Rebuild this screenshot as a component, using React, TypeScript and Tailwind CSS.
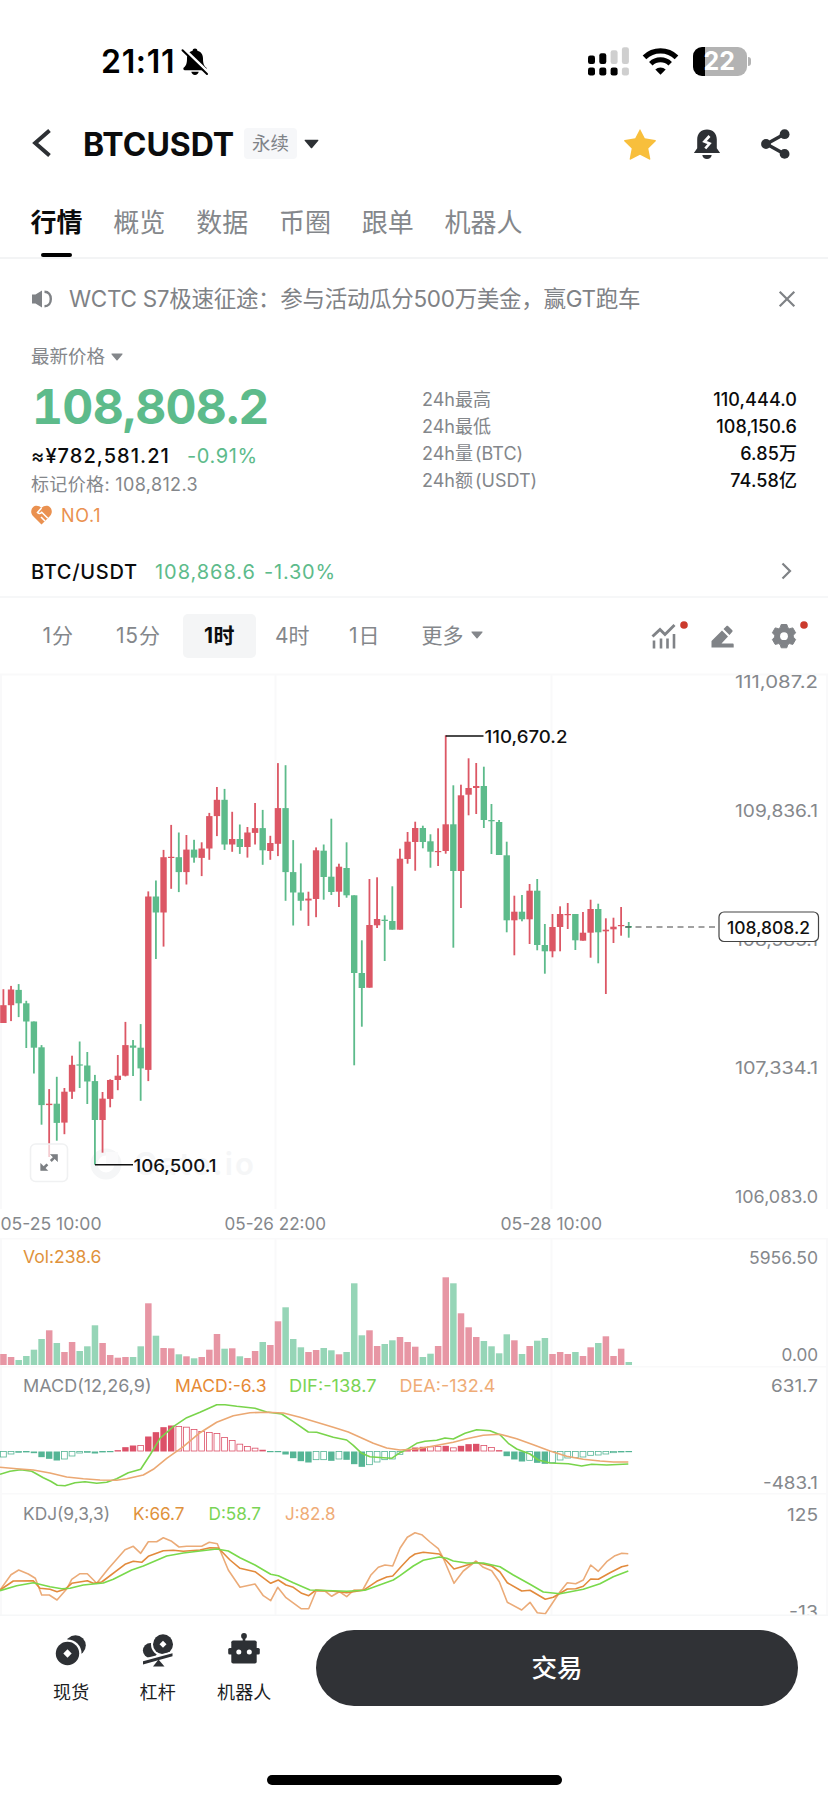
import React, { useState } from 'react';

type Dir = 'r' | 'g';
// [direction, high, open/close top, open/close bottom, low] in chart pixels
type Candle = [Dir, number, number, number, number];
type Point = [number, number];

const RED = '#dc5765';
const GREEN = '#5dbb8b';
const STEP = 7.626;
const FIRST_X = 3.4;
const AXIS = '#85888c';

const candles: Candle[] = [
  ['r', 989.2, 1005.2, 1023, 1023], ['r', 985.9, 989.5, 1005.2, 1021.1], ['g', 984.1, 989.9, 1003.3, 1017.1],
  ['g', 1000.8, 1003.3, 1021.5, 1048], ['g', 1021.5, 1021.5, 1047.7, 1073.5], ['g', 1045.1, 1047.3, 1105.1, 1124.7],
  ['r', 1089.1, 1103.7, 1105.1, 1157], ['g', 1076.8, 1103.7, 1122.9, 1140.7], ['r', 1088, 1091.7, 1122.6, 1134.2],
  ['r', 1055.7, 1064.8, 1091.7, 1098.9], ['g', 1041.5, 1064.4, 1065.5, 1088], ['g', 1052, 1065.5, 1081.5, 1104],
  ['g', 1074.9, 1081.1, 1120, 1164.7], ['r', 1092, 1098.6, 1120, 1152.7], ['r', 1079.3, 1080, 1098.9, 1107.3],
  ['r', 1055, 1075.7, 1080, 1090.2], ['r', 1021.9, 1045.1, 1075.7, 1076.4], ['g', 1040, 1045.5, 1047.7, 1076],
  ['g', 1024.1, 1047.7, 1068.4, 1100.8], ['r', 891.4, 896.5, 1069.9, 1081.1], ['g', 880.5, 896.5, 912.5, 959],
  ['r', 849.9, 857.2, 912.5, 946.6], ['r', 824.9, 856.8, 857.9, 888.8], ['g', 832.5, 857.2, 872.1, 892.1],
  ['r', 835, 849.6, 872.1, 884.5], ['g', 839.8, 849.6, 857.6, 862.7], ['r', 842.3, 848.5, 857.9, 876.1],
  ['r', 812.9, 816.1, 848.5, 859.8], ['r', 787, 799.8, 816.1, 836.1], ['g', 788.9, 799.8, 844.5, 849.9],
  ['r', 811.8, 839, 844.5, 851.8], ['g', 824.5, 839, 847, 853.9], ['r', 827, 832.5, 847, 857.6],
  ['r', 803, 828.1, 832.9, 844.5], ['g', 809.9, 828.1, 850.3, 864.8], ['r', 835.8, 843, 851, 859.8],
  ['r', 763.1, 808.1, 843.8, 856.1], ['g', 765.2, 808.1, 872.1, 900.8], ['g', 840.1, 872.1, 892.5, 925.5],
  ['g', 863.4, 892.5, 900.8, 910.6], ['r', 891.7, 898.6, 900.5, 925.9], ['r', 847.4, 850.3, 899, 917.2],
  ['g', 844.5, 850.7, 877, 899.7], ['g', 818.7, 876.7, 892, 895], ['r', 863.7, 866.7, 891.7, 907],
  ['g', 842.3, 868, 895.3, 897.7], ['g', 895.3, 895.3, 973, 1065.3], ['g', 940.3, 973, 988, 1026.7],
  ['r', 879, 925, 987.7, 987.7], ['r', 877.3, 919, 925.3, 928], ['g', 915.3, 919.7, 921, 961],
  ['g', 886.3, 921, 929.7, 929.7], ['r', 848.7, 858.7, 929.7, 929.7], ['r', 832, 841.7, 859, 863.7],
  ['r', 821.7, 828, 842, 870.7], ['g', 825.7, 828, 842, 848.3], ['g', 834.3, 841.3, 851.7, 867.7],
  ['r', 828.3, 851, 852, 866], ['r', 735.3, 824.3, 851, 853.7], ['g', 785.3, 824.3, 871, 947.7],
  ['r', 784.7, 795.3, 871, 908], ['r', 758.3, 788, 794.7, 815.3], ['r', 763, 786, 788, 814],
  ['g', 766.7, 786, 820, 828], ['g', 804, 820, 821.3, 854], ['g', 820, 822, 855, 855],
  ['g', 841.7, 855.3, 920.3, 932.3], ['r', 895.7, 911.7, 920.3, 955.3], ['g', 895, 911.7, 919.3, 921.3],
  ['r', 884, 890.7, 919.3, 944], ['g', 879, 890.7, 945, 950.3], ['g', 924, 945, 951.3, 973.7],
  ['r', 914, 927, 951.3, 957.3], ['r', 906.3, 914, 927, 951.3], ['r', 903, 914, 915, 929],
  ['g', 914, 914, 940.3, 950], ['r', 912, 932.7, 940.7, 940.7], ['r', 899.7, 909, 932.7, 957.7],
  ['g', 903.7, 909, 932.3, 963.3], ['r', 918.3, 929.7, 931.3, 994], ['r', 917.7, 926.7, 929.3, 943],
  ['r', 907, 925, 926, 935.7], ['g', 922, 926, 927.7, 937.7],
];

const volumes: number[] = [
  11, 8, 5, 9, 15.3, 26, 34.7, 22, 13, 23, 14, 18.7, 39.7, 22, 10, 7.3, 8, 8, 18.7, 61.7, 29.3, 17, 16.7, 10.7, 8.7,
  6.7, 8, 15.3, 31, 16.3, 16.7, 8.7, 7, 14, 23, 20, 43.7, 57.7, 26, 17.7, 13, 15, 17, 14.7, 10.7, 13, 81.7, 29.7,
  34.7, 19, 21, 24.7, 28, 23, 18.3, 8, 11.3, 19, 87.7, 81.7, 51.7, 37.7, 28, 24, 18.7, 11.7, 30.7, 24.7, 11, 19,
  24.3, 27, 11, 13, 11, 13, 9, 17.7, 22, 28.7, 9, 16.3, 3,
];

// positive = red above the zero line, negative = green below
const macd: number[] = [
  -18, -9, -4, -3, -5, -17, -22, -27, -24, -15, -6, -4, -6, -3, 0, 4, 13, 18, 18, 45, 58, 73, 78, 75, 73, 66, 60, 57,
  54, 42, 33, 22, 15, 10, 4, -1, -2, -9, -20, -29, -33, -26, -26, -28, -24, -25, -38, -46, -41, -33, -26, -24, -10, 4,
  12, 14, 14, 15, 17, 11, 17, 22, 23, 18, 12, 4, -14, -24, -30, -28, -34, -37, -35, -27, -21, -20, -18, -13, -12, -9,
  -5, -3, -2,
];

const macdFilled = [
  4, 5, 6, 7, 12, 15, 16, 17, 19, 20, 21, 22, 37, 38, 39, 40, 43, 45, 46, 47, 53, 54, 55, 58, 60, 61, 62, 65, 66, 67,
  68, 70, 71,
];

const difLine: Point[] = [
  [0, 313], [30, 304], [62, 299], [95, 304], [110, 312], [130, 323], [152, 334], [172, 346], [195, 347], [225, 338],
  [255, 335], [290, 340], [320, 337], [350, 326], [385, 308], [422, 298], [450, 255], [480, 205], [520, 170],
  [560, 143], [600, 127], [650, 104], [675, 104], [710, 109], [765, 115], [800, 126], [845, 132], [880, 155],
  [925, 186], [950, 187], [1000, 202], [1040, 210], [1060, 226], [1085, 250], [1110, 260], [1150, 263], [1175, 265],
  [1200, 248], [1225, 236], [1250, 220], [1275, 214], [1310, 211], [1335, 204], [1360, 207], [1395, 190],
  [1430, 179], [1470, 182], [1500, 194], [1525, 220], [1550, 237], [1590, 252], [1615, 270], [1650, 279],
  [1705, 281], [1745, 288], [1775, 283], [1820, 285], [1885, 282],
];

const deaLine: Point[] = [
  [0, 292], [50, 296], [100, 300], [150, 309], [200, 321], [250, 326], [300, 330], [350, 331], [380, 326], [430, 315],
  [460, 298], [500, 265], [550, 230], [600, 188], [650, 157], [700, 137], [750, 128], [800, 127], [850, 129],
  [900, 142], [950, 157], [1000, 172], [1045, 186], [1080, 202], [1120, 220], [1160, 234], [1200, 240], [1250, 237],
  [1300, 228], [1360, 217], [1400, 206], [1450, 196], [1500, 193], [1550, 206], [1600, 224], [1650, 243],
  [1700, 259], [1750, 268], [1800, 273], [1840, 276], [1885, 276],
];

const jLine: Point[] = [
  [0, 660], [33, 614], [56, 600], [85, 612], [106, 625], [125, 675], [148, 675], [171, 690], [200, 657], [215, 628],
  [240, 611], [262, 611], [290, 640], [325, 596], [375, 539], [400, 529], [422, 550], [445, 515], [470, 515],
  [490, 503], [515, 514], [537, 531], [560, 529], [605, 529], [628, 517], [652, 521], [685, 600], [720, 652],
  [765, 642], [790, 677], [812, 692], [833, 652], [858, 683], [903, 716], [926, 716], [948, 664], [975, 663],
  [995, 679], [1018, 665], [1040, 680], [1062, 660], [1088, 660], [1112, 616], [1135, 592], [1155, 585], [1178, 588],
  [1200, 535], [1222, 502], [1245, 488], [1265, 494], [1290, 516], [1315, 536], [1330, 565], [1362, 640],
  [1390, 603], [1428, 573], [1450, 592], [1475, 602], [1498, 635], [1522, 697], [1565, 720], [1590, 697],
  [1612, 728], [1636, 731], [1680, 665], [1702, 638], [1727, 641], [1750, 630], [1772, 585], [1795, 604],
  [1820, 575], [1845, 557], [1865, 550], [1885, 551],
];

const kLine: Point[] = [
  [0, 660], [40, 633], [100, 632], [120, 655], [150, 658], [171, 665], [195, 658], [215, 640], [262, 632], [280, 640],
  [305, 636], [375, 583], [400, 574], [425, 577], [445, 559], [490, 542], [520, 541], [550, 544], [600, 540],
  [630, 533], [655, 534], [690, 570], [720, 595], [765, 605], [812, 640], [835, 630], [858, 645], [880, 652],
  [905, 670], [926, 677], [948, 660], [1000, 664], [1040, 668], [1090, 661], [1130, 634], [1160, 621], [1178, 618],
  [1205, 588], [1230, 562], [1245, 552], [1270, 547], [1318, 552], [1340, 573], [1362, 597], [1385, 590],
  [1428, 577], [1475, 588], [1500, 606], [1522, 638], [1565, 663], [1590, 661], [1636, 688], [1660, 682],
  [1702, 657], [1727, 656], [1750, 649], [1772, 627], [1795, 628], [1830, 608], [1865, 590], [1885, 586],
];

const dLine: Point[] = [
  [0, 662], [50, 647], [100, 638], [150, 650], [185, 656], [210, 655], [250, 645], [310, 639], [340, 628], [395, 600],
  [430, 588], [500, 558], [550, 549], [600, 543], [650, 537], [685, 543], [720, 563], [765, 585], [812, 613],
  [835, 617], [880, 638], [930, 660], [1000, 662], [1040, 664], [1095, 661], [1120, 652], [1180, 630], [1200, 617],
  [1240, 588], [1270, 571], [1318, 561], [1340, 565], [1360, 573], [1400, 579], [1450, 579], [1500, 590],
  [1540, 615], [1590, 643], [1630, 666], [1680, 671], [1750, 658], [1800, 641], [1840, 620], [1885, 603],
];

const toPoints = (line: Point[]) =>
  line.map(([x, y]) => `${(x / 3).toFixed(1)},${(1370 + y / 3).toFixed(1)}`).join(' ');

const candleX = (i: number) => FIRST_X + i * STEP;

interface LabelProps {
  x: number;
  y: number;
  width: number;
  fill?: string;
  weight?: number;
  end?: boolean;
  children: string;
}

const Label: React.FC<LabelProps> = ({ x, y, width, fill = AXIS, weight = 400, end, children }) => (
  <text
    x={end ? x - width : x}
    y={y}
    fill={fill}
    fontSize={17.2}
    fontWeight={weight}
    textLength={width}
    lengthAdjust="spacingAndGlyphs"
  >
    {children}
  </text>
);

const GridLines: React.FC<{ top: number; bottom: number }> = ({ top, bottom }) => (
  <g stroke="#f9f9fa" strokeWidth={2}>
    <path d={`M1 ${top}V${bottom}M275.5 ${top}V${bottom}M551.5 ${top}V${bottom}M827 ${top}V${bottom}`} />
    <path d={`M0 ${top + 0.5}H828`} />
  </g>
);

const PriceChart = () => (
  <svg className="block h-[564px] w-[828px] overflow-visible" viewBox="0 674 828 564">
    <GridLines top={674} bottom={1209} />
    {/* watermark */}
    <circle cx={106} cy={1164} r={12} fill="none" stroke="#f5f6f7" strokeWidth={7} />
    <path d="M106 1152h12v12h-12z" fill="#fafafb" />
    <text x={134} y={1175} fill="#f5f6f7" fontSize={31} fontWeight={600} textLength={120}>Gate.io</text>

    {candles.map(([dir, high, top, bottom, low], i) => {
      const x = candleX(i);
      const color = dir === 'r' ? RED : GREEN;
      return (
        <g key={i} fill={color}>
          <rect x={x - 0.9} y={high} width={1.8} height={low - high} />
          <rect x={x - 3.2} y={top} width={6.4} height={Math.max(bottom - top, 1.2)} />
        </g>
      );
    })}

    <path d="M445.7 736H483.5M95 1164.7H133" stroke="#111" strokeWidth={1.4} />
    <Label x={484.5} y={742.8} width={83} fill="#111" weight={500}>110,670.2</Label>
    <Label x={133.5} y={1172} width={83} fill="#111" weight={500}>106,500.1</Label>

    <path d="M625 927H718" stroke="#444" strokeWidth={1.2} strokeDasharray="6 4.5" />

    <Label x={818} y={688.3} width={83} end>111,087.2</Label>
    <Label x={818} y={817} width={83} end>109,836.1</Label>
    <Label x={818} y={945.8} width={83} end>108,585.1</Label>
    <Label x={818} y={1074.3} width={83} end>107,334.1</Label>
    <Label x={818} y={1203} width={83} end>106,083.0</Label>

    <rect x={719} y={912} width={99.5} height={29.5} rx={5} fill="#fff" stroke="#444" strokeWidth={1.2} />
    <Label x={727} y={933.5} width={83} fill="#111" weight={500}>108,808.2</Label>

    {/* full screen toggle */}
    <rect x={30.5} y={1144} width={37} height={37.5} rx={5} fill="#fff" fillOpacity={0.7} stroke="#f0f1f2" strokeWidth={1.6} />
    <g fill="#7c7f83" stroke="#7c7f83">
      <path d="M50.5 1154.5H57.5V1161.5ZM40.7 1163.5V1170.5H47.7Z" strokeWidth={0.6} />
      <path d="M50.8 1161L55 1156.8M47.4 1164.3L43.2 1168.5" strokeWidth={2.6} />
    </g>

    <Label x={0.5} y={1229.5} width={101}>05-25 10:00</Label>
    <Label x={224.5} y={1229.5} width={101.5}>05-26 22:00</Label>
    <Label x={500.5} y={1229.5} width={101.5}>05-28 10:00</Label>
  </svg>
);

const VolumeChart = () => (
  <svg className="block h-[128px] w-[828px]" viewBox="0 1238 828 128">
    <GridLines top={1238} bottom={1366} />
    {volumes.map((height, i) => (
      <rect
        key={i}
        x={candleX(i) - 3.2}
        y={1365 - height}
        width={6.5}
        height={height}
        fill={candles[i][0] === 'r' ? '#e796a4' : '#96d5b7'}
      />
    ))}
    <Label x={23} y={1263.3} width={78.5} fill="#e0923c">Vol:238.6</Label>
    <Label x={818} y={1264.3} width={69} end>5956.50</Label>
    <Label x={818} y={1361.3} width={36.5} end>0.00</Label>
  </svg>
);

const MacdChart = () => (
  <svg className="block h-[127px] w-[828px]" viewBox="0 1366 828 127">
    <GridLines top={1366} bottom={1493} />
    {macd.map((value, i) => {
      const height = Math.abs(value) / 3;
      const color = value > 0 ? '#dc5068' : '#55b595';
      const y = value > 0 ? 1451.5 - height : 1451.5;
      if (macdFilled.includes(i)) {
        return <rect key={i} x={candleX(i) - 3.2} y={y} width={6.4} height={height} fill={color} />;
      }
      return (
        <rect
          key={i}
          x={candleX(i) - 2.9}
          y={y}
          width={5.8}
          height={Math.max(height - 0.5, 0.3)}
          fill="#fff"
          stroke={color}
          strokeWidth={0.8}
        />
      );
    })}
    <polyline points={toPoints(difLine)} fill="none" stroke="#79d44b" strokeWidth={1.6} strokeLinejoin="round" />
    <polyline points={toPoints(deaLine)} fill="none" stroke="#eba873" strokeWidth={1.6} strokeLinejoin="round" />
    <Label x={23} y={1391.8} width={128.5}>MACD(12,26,9)</Label>
    <Label x={175} y={1391.8} width={91.5} fill="#e68a35">MACD:-6.3</Label>
    <Label x={289} y={1391.8} width={87.5} fill="#7ad455">DIF:-138.7</Label>
    <Label x={399.5} y={1391.8} width={96} fill="#efac77">DEA:-132.4</Label>
    <Label x={818} y={1392.3} width={47} end>631.7</Label>
    <Label x={818} y={1489.3} width={55} end>-483.1</Label>
  </svg>
);

const KdjChart = () => (
  <svg className="block h-[123px] w-[828px]" viewBox="0 1493 828 123">
    <GridLines top={1493} bottom={1616} />
    <polyline points={toPoints(jLine)} fill="none" stroke="#ebab78" strokeWidth={1.6} strokeLinejoin="round" />
    <polyline points={toPoints(kLine)} fill="none" stroke="#e28a3c" strokeWidth={1.6} strokeLinejoin="round" />
    <polyline points={toPoints(dLine)} fill="none" stroke="#79d94b" strokeWidth={1.6} strokeLinejoin="round" />
    <Label x={23} y={1520} width={87}>KDJ(9,3,3)</Label>
    <Label x={133} y={1520} width={51.5} fill="#e0923c">K:66.7</Label>
    <Label x={208.5} y={1520} width={52.5} fill="#7ad455">D:58.7</Label>
    <Label x={285} y={1520} width={50.5} fill="#efac77">J:82.8</Label>
    <Label x={818} y={1520.6} width={31} end>125</Label>
    <Label x={818} y={1617.6} width={29} end>-13</Label>
    <path d="M0 1615.3H828" stroke="#f6f7f8" strokeWidth={1.5} />
  </svg>
);

const Caret: React.FC<{ className: string }> = ({ className }) => (
  <svg className={className} viewBox="0 0 14 9" fill="currentColor">
    <path d="M1.2.5h11.6c.6 0 .9.6.5 1L7.6 8.2c-.3.4-.9.4-1.2 0L.7 1.5c-.4-.4-.1-1 .5-1z" />
  </svg>
);

const StatusBar = () => (
  <div className="flex h-[122px] items-center pl-[101px] pr-[77px]">
    <span className="pt-[2px] text-[32px] font-semibold leading-none tracking-[0.7px] text-black">21:11</span>
    <svg className="ml-[5px] mt-[2px] h-[30px] w-[30px]" viewBox="0 0 30 30">
      <path
        d="M15 1.5c1.4 0 2.3.9 2.4 2.2 3.6 1 5.6 3.9 5.6 7.7 0 5 .9 7 3.2 9.2.9 1 .5 2.7-1.2 2.7H5c-1.7 0-2.1-1.7-1.2-2.7C6.1 18.4 7 16.400 7 11.4c0-3.8 2-6.7 5.600-7.700.1-1.3 1-2.2 2.4-2.2zM11.3 24.8h7.400c-.3 2-1.800 3.200-3.700 3.200s-3.400-1.200-3.700-3.200z"
        fill="#000"
      />
      <path d="M3.5 1.5L29 26" stroke="#fff" strokeWidth={3} />
      <path d="M2.5 3.2L27 27" stroke="#000" strokeWidth={2} strokeLinecap="round" />
    </svg>
    <div className="ml-auto flex items-center">
      <svg className="h-[29px] w-[42px]" viewBox="0 0 42 29">
        <g fill="#000">
          <rect x="0" y="8.5" width="7" height="8.5" rx="2.2" />
          <rect x="11.3" y="6.2" width="7" height="10.8" rx="2.2" />
          <rect x="0" y="20.5" width="7" height="8" rx="2.2" />
          <rect x="11.3" y="20.5" width="7" height="8" rx="2.2" />
          <rect x="22.600" y="20.5" width="7" height="8" rx="2.2" />
        </g>
        <g fill="#cfcfcf">
          <rect x="22.6" y="3.3" width="7" height="13.7" rx="2.2" />
          <rect x="33.9" y="0.2" width="7" height="16.8" rx="2.2" />
          <rect x="33.9" y="20.5" width="7" height="8" rx="2.2" />
        </g>
      </svg>
      <svg className="ml-[12px] mr-[1px] h-[27px] w-[37px]" viewBox="0 0 37 27">
        <path d="M2.5 9.3a23 23 0 0 1 32 0" fill="none" stroke="#000" strokeWidth={5.2} />
        <path d="M8.8 15.7a14 14 0 0 1 19.4 0" fill="none" stroke="#000" strokeWidth={5} />
        <path d="M18.5 26.8l-5.2-5.3a7.5 7.5 0 0 1 10.4 0z" fill="#000" />
      </svg>
      <div className="ml-[13px] flex h-[29px] w-[54px] items-center overflow-hidden rounded-[9px] bg-[linear-gradient(90deg,#000_0_12px,#b3b3b3_12px)] pl-[11px]">
        <span className="text-[25px] font-bold leading-none text-white">22</span>
      </div>
      <div className="ml-[1.5px] h-[9px] w-[3px] rounded-r-full bg-[#b3b3b3]" />
    </div>
  </div>
);

const Header = () => (
  <div className="flex h-[42px] items-center pl-[31px] pr-[37px] text-[#2d3034]">
    <svg className="h-[30px] w-[22px]" viewBox="0 0 22 30">
      <path d="M18.5 2.5L4.2 15l14.300 12.5" fill="none" stroke="currentColor" strokeWidth={4} />
    </svg>
    <h1 className="ml-[30px] w-[153px] whitespace-nowrap pt-[3px] text-[32px] font-bold leading-none tracking-[0px] text-[#0b0c0d]">BTCUSDT</h1>
    <span className="ml-[8px] mt-[1px] flex h-[31px] w-[53px] items-center justify-center rounded-[4px] bg-[#f6f7f9] text-[18.5px] text-[#7f8388]">永续</span>
    <Caret className="ml-[7px] mt-[2px] h-[10px] w-[15px]" />
    <svg className="ml-auto mt-[1px] h-[32px] w-[34px]" viewBox="0 0 34 32">
      <path
        d="M17 1l4.8 9.3 10.4 1.6c.7.1 1 .9.5 1.4l-7.4 7.1 2 10.300c.2.7-.5 1.200-1.100.9L17 26.800l-9.200 4.800c-.6.300-1.300-.2-1.100-.9l2-10.300-7.400-7.100c-.5-.5-.2-1.300.5-1.400l10.400-1.600z"
        fill="#f8bf3c"
      />
    </svg>
    <svg className="ml-[35px] mt-[1px] h-[32px] w-[30px]" viewBox="0 0 30 32">
      <path d="M15 1.5c6 0 9.8 4.1 9.8 10v8.800l3.300 4.700H1.9l3.300-4.700v-8.800c0-5.9 3.800-10 9.800-10zM10.300 27h9.400c-.4 2.500-2.100 4-4.700 4s-4.300-1.500-4.700-4z" fill="currentColor" />
      <path d="M17.5 8l-5 5.500 5 2-4.200 5" fill="none" stroke="#fff" strokeWidth={2.7} />
    </svg>
    <svg className="ml-[38px] mt-[1px] h-[32px] w-[31px]" viewBox="0 0 31 32">
      <path d="M24.5 6L6.500 16l18 10" fill="none" stroke="currentColor" strokeWidth={3.4} />
      <circle cx="24.6" cy="6.2" r="4.9" fill="currentColor" />
      <circle cx="6" cy="16" r="4.9" fill="currentColor" />
      <circle cx="24.6" cy="25.9" r="4.9" fill="currentColor" />
    </svg>
  </div>
);

const tabs = ['行情', '概览', '数据', '币圈', '跟单', '机器人'];

const Tabs = () => {
  const [active, setActive] = useState('行情');
  return (
    <nav className="flex h-[95px] gap-[30.8px] border-b-2 border-[#f3f4f5] pl-[30.5px]">
      {tabs.map(tab => (
        <button
          key={tab}
          onClick={() => setActive(tab)}
          className={`flex flex-col items-center pt-[40px] text-[26px] leading-[38px] ${
            tab === active ? 'font-bold text-[#0b0c0d]' : 'text-[#84878b]'
          }`}
        >
          {tab}
          {tab === active && <span className="mt-auto h-[4.5px] w-[31px] rounded-[2px] bg-black" />}
        </button>
      ))}
    </nav>
  );
};

const Notice = () => (
  <div className="flex h-[80px] items-center pl-[31px] pr-[32px] text-[#7f8286]">
    <svg className="h-[20px] w-[22px]" viewBox="0 0 22 20">
      <path d="M1 5.500h3.500l6.500-4v17l-6.500-4H1z" fill="currentColor" />
      <path d="M13.5 2.800c4 0 6.300 3 6.300 7.200s-2.300 7.200-6.300 7.200" fill="none" stroke="currentColor" strokeWidth={2.4} />
    </svg>
    <p className="ml-[16px] whitespace-nowrap text-[22.5px] leading-none tracking-[-0.3px]">WCTC S7极速征途：参与活动瓜分500万美金，赢GT跑车</p>
    <svg className="ml-auto h-[18px] w-[18px]" viewBox="0 0 18 18">
      <path d="M1.7 1.7l14.6 14.6M16.3 1.7L1.7 16.3" stroke="currentColor" strokeWidth={2.2} />
    </svg>
  </div>
);

const stats = [
  { label: '24h最高', value: '110,444.0' },
  { label: '24h最低', value: '108,150.6' },
  { label: '24h量 (BTC)', value: '6.85万' },
  { label: '24h额 (USDT)', value: '74.58亿' },
];

const Ticker = () => (
  <div className="flex h-[194px] pl-[31px] pr-[31px] text-[18px] text-[#84878b]">
    <div className="w-[391px]">
      <div className="flex h-[36px] items-center gap-[6px] text-[18.5px]">
        最新价格
        <Caret className="h-[8px] w-[12px]" />
      </div>
      <div className="flex h-[62px] items-center pl-[1px] pt-px text-[48px] font-bold leading-none tabular-nums tracking-[-0.7px] text-[#5dbb8b]">108,808.2</div>
      <div className="flex h-[36px] items-center pt-[2px] text-[20px]">
        <span className="w-[156px] whitespace-nowrap font-medium tracking-[1.05px] text-[#0b0c0d]">≈¥782,581.21</span>
        <span className="tracking-[0.6px] text-[#5dbb8b]">-0.91%</span>
      </div>
      <div className="h-[24px] leading-[24px] tracking-[0.35px]">标记价格: 108,812.3</div>
      <div className="flex h-[36px] items-center gap-[9px] tracking-[0.7px] text-[#ea9150]">
        <svg className="h-[20px] w-[21px]" viewBox="0 0 21 20">
          <path d="M10.5 19.5L2 11C-.5 8.3-.3 4.3 2 2.2 4.3 0 8 .3 10.5 3 13 .3 16.7 0 19 2.200c2.300 2.100 2.500 6.100 0 8.800z" fill="currentColor" />
          <path d="M10.5 3L6.500 7.500c1.300 1.500 3 1.300 4.300-.2l6 6M10 12l4 4" fill="none" stroke="#fff" strokeWidth={1.6} />
        </svg>
        NO.1
      </div>
    </div>
    <dl className="flex-1 pt-[47px]">
      {stats.map(stat => (
        <div key={stat.label} className="flex h-[27px] items-center justify-between">
          <dt className="[word-spacing:-3px]">{stat.label}</dt>
          <dd className="font-medium tracking-[0.1px] text-[#0b0c0d]">{stat.value}</dd>
        </div>
      ))}
    </dl>
  </div>
);

const SpotRow = () => (
  <div className="flex h-[65px] items-center border-b-2 border-[#f6f7f8] pl-[31px] pr-[36px] pt-[15px] text-[20px]">
    <span className="w-[124px] font-medium tracking-[0.7px] text-[#0b0c0d]">BTC/USDT</span>
    <span className="w-[109px] tracking-[0.95px] text-[#5dbb8b]">108,868.6</span>
    <span className="tracking-[0.8px] text-[#5dbb8b]">-1.30%</span>
    <svg className="mb-[2px] ml-auto h-[18px] w-[11px] text-[#7f8286]" viewBox="0 0 11 18">
      <path d="M1.5 1.5L9 9l-7.5 7.5" fill="none" stroke="currentColor" strokeWidth={2.2} />
    </svg>
  </div>
);

const Periods = () => (
  <div className="flex h-[76px] items-center pb-[2px] pl-[42.5px] pr-[19.5px] text-[21px] leading-none text-[#84878b]">
    <span className="w-[73.5px] tracking-[1px]">1分</span>
    <span className="w-[67px] tracking-[0.8px]">15分</span>
    <span className="mt-[2px] flex h-[44px] w-[73px] items-center justify-center rounded-[5px] bg-[#f4f5f6] pb-[2px] font-bold tracking-[0.4px] text-[#0b0c0d]">1时</span>
    <span className="ml-[19px] w-[74px]">4时</span>
    <span className="w-[72px] tracking-[1px]">1日</span>
    <span className="ml-[0.5px] flex items-center gap-[7px]">
      更多
      <Caret className="h-[8px] w-[12px]" />
    </span>
    <div className="ml-auto flex h-[30px] items-end text-[#808387]">
      <svg className="h-[30px] w-[38px]" viewBox="0 0 38 30">
        <path d="M1.5 16.5L9 9.5l5 5L23.5 5" fill="none" stroke="currentColor" strokeWidth={2.9} />
        <path d="M3 20.5V28.500M10 18.500V28.500M16.5 18.500V28.500M23 14V28.500" stroke="currentColor" strokeWidth={2.6} />
        <circle cx="33" cy="5" r="3.8" fill="#cb3a2d" />
      </svg>
      <svg className="ml-[21px] h-[30px] w-[26px]" viewBox="0 0 26 30">
        <path d="M1.5 27.5v-6.500L12 10.500l6 6-6.500 7h11c.8 0 1.200.5 1.200 1.200v2.800z" fill="currentColor" />
        <path d="M13.500 9l3-3c.5-.5 1-.5 1.500 0l4.300 4.300c.5.500.5 1 0 1.500L19.500 15z" fill="currentColor" />
      </svg>
      <svg className="ml-[35px] h-[30px] w-[38px]" viewBox="0 0 38 30">
        <path
          d="M10.2 4.500h5.600l1 3.200 1.700 1 3.300-.8 2.800 4.900-2.300 2.400v1.900l2.300 2.400-2.800 4.900-3.300-.8-1.700 1-1 3.200h-5.600l-1-3.200-1.700-1-3.300.8-2.800-4.900 2.300-2.400v-1.900l-2.300-2.400 2.800-4.900 3.300.8 1.700-1z"
          fill="currentColor"
          stroke="currentColor"
          strokeLinejoin="round"
        />
        <circle cx="13" cy="16.2" r="3.9" fill="#fff" />
        <circle cx="33" cy="5" r="3.8" fill="#cb3a2d" />
      </svg>
    </div>
  </div>
);

const SpotIcon = () => (
  <svg className="h-[34px] w-[34px]" viewBox="0 0 34 34" fill="#2d3034">
    <circle cx="21.5" cy="12.5" r="10.3" />
    <circle cx="13.5" cy="20.5" r="14" fill="#fff" />
    <circle cx="13.5" cy="20.5" r="11.7" />
    <path d="M13.5 16.300l4.200 4.200-4.200 4.200-4.200-4.200z" fill="#fff" />
  </svg>
);

const MarginIcon = () => (
  <svg className="h-[34px] w-[34px]" viewBox="0 0 34 34" fill="#2d3034">
    <circle cx="9.5" cy="17.5" r="7.6" />
    <circle cx="22" cy="11.2" r="12" fill="#fff" />
    <circle cx="22" cy="11.2" r="10" />
    <path d="M22 7.700l3.500 3.500-3.500 3.500-3.500-3.500z" fill="#fff" />
    <path d="M1 26L33 18V25L1 34z" fill="#fff" />
    <path d="M2 28.300L31.500 20.200V23.200L2 31.400z" />
    <path d="M17.5 26.500l6 7H12z" />
  </svg>
);

const BotIcon = () => (
  <svg className="h-[34px] w-[34px]" viewBox="0 0 34 34" fill="#2d3034">
    <circle cx="17" cy="3" r="2.9" />
    <path d="M15.7 4h2.600v5h-2.600z" />
    <rect x="4.3" y="7.5" width="25.4" height="23" rx="1.8" />
    <rect x="1.200" y="15" width="31.600" height="6.5" rx="1.5" />
    <circle cx="11.8" cy="19" r="2.5" fill="#fff" />
    <circle cx="22.3" cy="19" r="2.5" fill="#fff" />
  </svg>
);

const shortcuts = [
  { label: '现货', icon: <SpotIcon /> },
  { label: '杠杆', icon: <MarginIcon /> },
  { label: '机器人', icon: <BotIcon /> },
];

const BottomBar = () => (
  <div className="flex h-[159px] items-start pl-[28px] pr-[30px] pt-[14px]">
    {shortcuts.map(item => (
      <button key={item.label} className="flex w-[86.5px] flex-col items-center pt-[3px] text-[18px] text-[#1b1d1f]">
        {item.icon}
        <span className="mt-[16px] whitespace-nowrap leading-[20px] tracking-[0.2px]">{item.label}</span>
      </button>
    ))}
    <button className="ml-auto h-[76px] w-[482px] rounded-full bg-[#303236] text-[25.5px] font-medium text-white">交易</button>
  </div>
);

export default function App() {
  return (
    <div className="flex h-[1800px] w-[828px] flex-col overflow-hidden bg-white font-['Inter','Noto_Sans_CJK_SC',sans-serif]">
      <StatusBar />
      <Header />
      <Tabs />
      <Notice />
      <Ticker />
      <SpotRow />
      <Periods />
      <PriceChart />
      <VolumeChart />
      <MacdChart />
      <KdjChart />
      <BottomBar />
      <div className="mx-auto h-[10px] w-[295px] rounded-full bg-black" />
    </div>
  );
}
